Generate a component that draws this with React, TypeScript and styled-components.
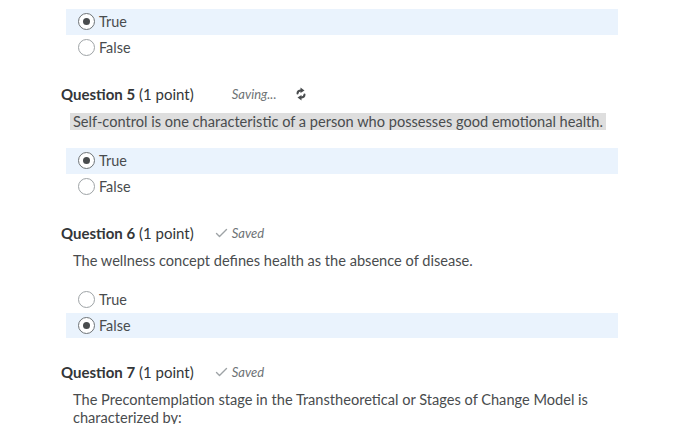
import { createGlobalStyle, styled } from 'styled-components';

interface IQuestion {
  id: number;
  number?: number;
  text?: string;
  status?: 'saving' | 'saved';
  highlighted?: boolean;
  options: string[];
  selected: number;
}

const QUESTIONS: IQuestion[] = [
  { id: 4, options: ['True', 'False'], selected: 0 },
  {
    id: 5,
    number: 5,
    text: 'Self-control is one characteristic of a person who possesses good emotional health.',
    status: 'saving',
    highlighted: true,
    options: ['True', 'False'],
    selected: 0,
  },
  {
    id: 6,
    number: 6,
    text: 'The wellness concept defines health as the absence of disease.',
    status: 'saved',
    options: ['True', 'False'],
    selected: 1,
  },
  {
    id: 7,
    number: 7,
    text: 'The Precontemplation stage in the Transtheoretical or Stages of Change Model is characterized by:',
    status: 'saved',
    options: [],
    selected: -1,
  },
];

const GlobalStyle = createGlobalStyle`
  html, body {
    margin: 0;
    padding: 0;
    background: #ffffff;
  }
  body {
    font-family: Lato, 'Open Sans', sans-serif;
    color: #494c4e;
  }
`;

const SyncIcon = () => (
  <svg width="10" height="14" viewBox="0 0 10 14" fill="none">
    <path d="M1.5 6.5 C1.5 4.5 3 3.5 5 3.5" stroke="#494c4e" strokeWidth="2" strokeLinecap="round" />
    <path d="M4.5 0.5 L8.5 3.5 L4.5 6 Z" fill="#494c4e" />
    <path d="M8.5 7.5 C8.5 9.5 7 10.5 5 10.5" stroke="#494c4e" strokeWidth="2" strokeLinecap="round" />
    <path d="M5.5 8 L1.5 10.5 L5.5 13.5 Z" fill="#494c4e" />
  </svg>
);

const CheckIcon = () => (
  <svg width="13" height="10" viewBox="0 0 13 10" fill="none">
    <path d="M1.5 5.5 L4.5 8.5 L11.5 1.5" stroke="#9ea3a6" strokeWidth="1.4" strokeLinecap="round" strokeLinejoin="round" />
  </svg>
);

const Question = ({ q }: { q: IQuestion }) => (
  <Block $withHeading={q.number !== undefined}>
    {q.number !== undefined && (
      <>
        <Heading>
          <strong>Question {q.number}</strong> (1 point)
          <Status>
            <StatusMark>{q.status === 'saved' && <CheckIcon />}</StatusMark>
            <em>{q.status === 'saving' ? 'Saving...' : 'Saved'}</em>
            {q.status === 'saving' && (
              <Spinner>
                <SyncIcon />
              </Spinner>
            )}
          </Status>
        </Heading>
        <Prompt>
          <PromptText $highlighted={q.highlighted}>{q.text}</PromptText>
        </Prompt>
      </>
    )}
    {q.options.length > 0 && (
      <Options $withHeading={q.number !== undefined}>
        {q.options.map((opt, i) => (
          <Option key={opt} $active={q.selected === i}>
            <Radio $checked={q.selected === i} />
            {opt}
          </Option>
        ))}
      </Options>
    )}
  </Block>
);

const App = () => (
  <>
    <GlobalStyle />
    <Page>
      {QUESTIONS.map((q) => (
        <Question key={q.id} q={q} />
      ))}
    </Page>
  </>
);

const Page = styled.main`
  width: 700px;
  height: 424px;
  overflow: hidden;
  padding: 9px 0 0 61px;
  box-sizing: border-box;
`;

const Block = styled.section<{ $withHeading: boolean }>`
  margin-top: ${(p) => (p.$withHeading ? '24px' : '0')};
`;

const Heading = styled.h2`
  display: flex;
  align-items: center;
  height: 20px;
  margin: 0;
  font-size: 15px;
  font-weight: 400;
  color: #333638;
  white-space: pre;
  strong {
    font-weight: 700;
  }
`;

const Status = styled.span`
  display: flex;
  align-items: center;
  margin-left: 21px;
  font-size: 13px;
  color: #6e7376;
  em {
    font-style: italic;
  }
`;

const StatusMark = styled.span`
  display: inline-flex;
  width: 17px;
`;

const Spinner = styled.span`
  display: inline-flex;
  margin-left: 20px;
  margin-top: -1px;
`;

const Prompt = styled.p`
  margin: 9px 0 0 9px;
  font-size: 14.6px;
  line-height: 18px;
  width: 548px;
`;

const PromptText = styled.span<{ $highlighted?: boolean }>`
  padding: 0 3px;
  -webkit-box-decoration-break: clone;
  box-decoration-break: clone;
  background: ${(p) => (p.$highlighted ? '#dedede' : 'transparent')};
`;

const Options = styled.ul<{ $withHeading: boolean }>`
  list-style: none;
  margin: ${(p) => (p.$withHeading ? '17px' : '0')} 0 0 5px;
  padding: 0;
  width: 552px;
`;

const Option = styled.li<{ $active: boolean }>`
  display: flex;
  align-items: center;
  gap: 4px;
  height: 25.5px;
  padding-left: 12px;
  font-size: 14.4px;
  background: ${(p) => (p.$active ? '#eaf3fd' : 'transparent')};
`;

const Radio = styled.span<{ $checked: boolean }>`
  position: relative;
  width: 17px;
  height: 17px;
  box-sizing: border-box;
  border-radius: 50%;
  border: 1px solid ${(p) => (p.$checked ? '#6e7376' : '#9ea3a6')};
  background: #ffffff;
  &::after {
    content: '';
    display: ${(p) => (p.$checked ? 'block' : 'none')};
    position: absolute;
    left: 50%;
    top: 50%;
    width: 7px;
    height: 7px;
    margin: -3.5px 0 0 -3.5px;
    border-radius: 50%;
    background: #494c4e;
  }
`;

export default App;
